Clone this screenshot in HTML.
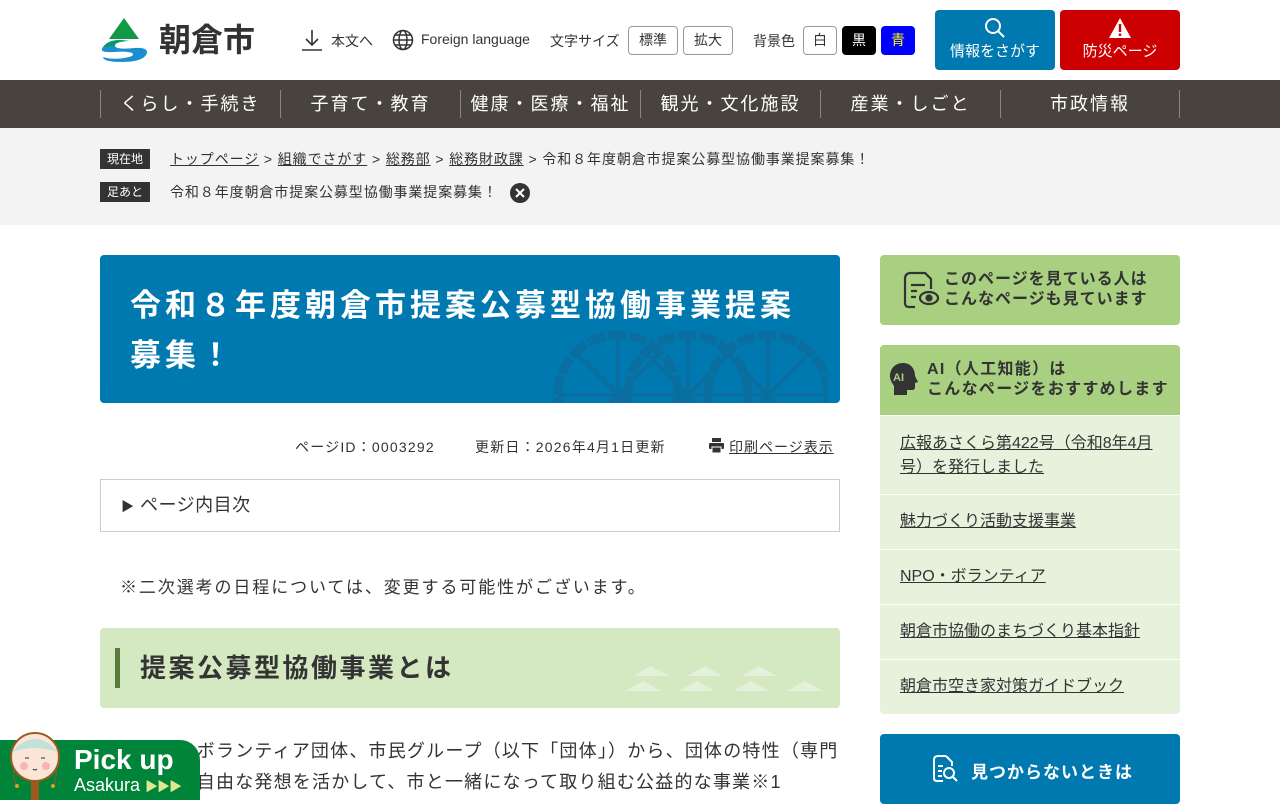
<!DOCTYPE html>
<html lang="ja"><head><meta charset="utf-8">
<style>
*{margin:0;padding:0;box-sizing:border-box}
body{width:1280px;height:800px;overflow:hidden;background:#fff;font-family:"Liberation Sans","Noto Sans CJK JP",sans-serif;color:#333;position:relative}
.a{position:absolute}
.btn{position:absolute;border:1px solid #999;border-radius:4px;font-size:14px;text-align:center;line-height:26px;background:#fff;color:#333}
.nav{position:absolute;top:80px;left:0;width:1280px;height:48px;background:#48433c}
.nav div{position:absolute;top:10px;height:28px;width:180px;border-left:1px solid #8a857e;color:#fff;font-size:18px;text-align:center;line-height:28px;letter-spacing:2px}
.lbl{position:absolute;left:100px;width:50px;height:20px;background:#333;color:#fff;font-size:12px;text-align:center;line-height:20px}
.bc{position:absolute;left:170px;font-size:14px;color:#333;line-height:20px;letter-spacing:0.9px}
.bc u{text-decoration:underline}
.li{position:absolute;left:880px;width:300px;background:#e7f2dd;border-top:1px solid #fff;font-size:16px;padding-left:20px;color:#333}
.li span{text-decoration:underline}
</style></head><body>
<svg class="a" style="left:100px;top:17px" width="50" height="46" viewBox="0 0 50 46">
<polygon points="24,1 9,22 39,22" fill="#109a47"/>
<path d="M3 30 Q10 20 30 24 Q16 23 15 28 Q14 33 34 31 Q48 30 47 36 Q44 45 22 45 Q3 45 3 40 Q12 43 24 41 Q36 39 32 36 Q28 34 14 35 Q-2 36 3 30Z" fill="#1a8fd0"/>
<path d="M3 30 Q10 22 28 24 Q16 25 15 28 Q8 30 3 30Z" fill="#109a47"/>
</svg>
<div class="a" style="left:159px;top:20px;font-size:32px;font-weight:bold;color:#333;line-height:40px">朝倉市</div>
<svg class="a" style="left:301px;top:29px" width="22" height="22" viewBox="0 0 22 22" fill="none" stroke="#333" stroke-width="1.6"><path d="M11 1v15M5 10l6 6 6-6M1 21h20"/></svg>
<div class="a" style="left:331px;top:31px;font-size:14px">本文へ</div>
<svg class="a" style="left:392px;top:29px" width="22" height="22" viewBox="0 0 22 22" fill="none" stroke="#333" stroke-width="1.5"><circle cx="11" cy="11" r="9.5"/><ellipse cx="11" cy="11" rx="4" ry="9.5"/><path d="M1.5 11h19M3 6h16M3 16h16"/></svg>
<div class="a" style="left:421px;top:31px;font-size:14px">Foreign language</div>
<div class="a" style="left:550px;top:31px;font-size:14px">文字サイズ</div>
<div class="btn" style="left:628px;top:26px;width:50px;height:29px">標準</div>
<div class="btn" style="left:683px;top:26px;width:50px;height:29px">拡大</div>
<div class="a" style="left:753px;top:31px;font-size:14px">背景色</div>
<div class="btn" style="left:803px;top:26px;width:34px;height:29px">白</div>
<div class="btn" style="left:842px;top:26px;width:34px;height:29px;background:#000;color:#fff;border-color:#000">黒</div>
<div class="btn" style="left:881px;top:26px;width:34px;height:29px;background:#00f;color:#ff0;border-color:#00f">青</div>
<div class="a" style="left:935px;top:10px;width:120px;height:60px;background:#0079b0;border-radius:4px;color:#fff;font-size:15px;text-align:center">
<svg style="margin-top:7px" width="22" height="22" viewBox="0 0 22 22" fill="none" stroke="#fff" stroke-width="2"><circle cx="9" cy="9" r="7"/><path d="M14 14l6 6"/></svg>
<div style="line-height:18px;margin-top:0">情報をさがす</div></div>
<div class="a" style="left:1060px;top:10px;width:120px;height:60px;background:#cc0000;border-radius:4px;color:#fff;font-size:15px;text-align:center">
<svg style="margin-top:7px" width="24" height="22" viewBox="0 0 24 22"><polygon points="12,1 23,21 1,21" fill="#fff"/><rect x="10.8" y="7" width="2.4" height="8" fill="#c00"/><rect x="10.8" y="16.5" width="2.4" height="2.4" fill="#c00"/></svg>
<div style="line-height:18px">防災ページ</div></div>
<div class="nav">
<div style="left:100px">くらし・手続き</div>
<div style="left:280px">子育て・教育</div>
<div style="left:460px">健康・医療・福祉</div>
<div style="left:640px">観光・文化施設</div>
<div style="left:820px">産業・しごと</div>
<div style="left:1000px;border-right:1px solid #8a857e">市政情報</div>
</div>
<div class="a" style="left:0;top:128px;width:1280px;height:97px;background:#f3f3f3"></div>
<div class="lbl" style="top:149px">現在地</div>
<div class="bc" style="top:149px"><u>トップページ</u> &gt; <u>組織でさがす</u> &gt; <u>総務部</u> &gt; <u>総務財政課</u> &gt; 令和８年度朝倉市提案公募型協働事業提案募集！</div>
<div class="lbl" style="top:182px">足あと</div>
<div class="bc" style="top:182px">令和８年度朝倉市提案公募型協働事業提案募集！</div>
<svg class="a" style="left:510px;top:183px" width="20" height="20" viewBox="0 0 20 20"><circle cx="10" cy="10" r="10" fill="#333"/><path d="M6 6l8 8M14 6l-8 8" stroke="#fff" stroke-width="2"/></svg>
<div class="a" style="left:100px;top:255px;width:740px;height:148px;background:#0079b0;border-radius:4px;overflow:hidden">
<svg class="a" style="left:448px;top:60px" width="280" height="100" viewBox="0 0 280 100" fill="none" stroke="#0a6ea0" stroke-width="9"><circle cx="70" cy="80" r="60" stroke-dasharray="18 3"/><circle cx="140" cy="80" r="60" stroke-dasharray="18 3"/><circle cx="220" cy="80" r="60" stroke-dasharray="18 3"/><g stroke-width="4"><path d="M10 80h270M70 20v80M140 20v80M220 20v80M30 40l80 80M110 40l-80 80M100 40l80 80M180 40l-80 80M180 40l80 80M260 40l-80 80"/></g></svg>
<div class="a" style="left:30px;top:26px;width:680px;font-size:31px;font-weight:bold;color:#fff;line-height:50px;letter-spacing:4px">令和８年度朝倉市提案公募型協働事業提案募集！</div>
</div>
<div class="a" style="left:295px;top:437px;font-size:14px;letter-spacing:1.2px">ページID：0003292</div>
<div class="a" style="left:475px;top:437px;font-size:14px;letter-spacing:1.2px">更新日：2026年4月1日更新</div>
<svg class="a" style="left:709px;top:438px" width="15" height="15" viewBox="0 0 15 15" fill="#333"><rect x="3" y="0" width="9" height="4"/><rect x="0" y="5" width="15" height="6" rx="1"/><rect x="3" y="9" width="9" height="6" fill="#333" stroke="#fff" stroke-width="1"/></svg>
<div class="a" style="left:729px;top:437px;font-size:14px;text-decoration:underline;letter-spacing:1px">印刷ページ表示</div>
<div class="a" style="left:100px;top:479px;width:740px;height:53px;border:1px solid #ccc;font-size:18px;padding-left:20px;line-height:51px;letter-spacing:0.5px"><span style="font-size:13px">▶</span> ページ内目次</div>
<div class="a" style="left:120px;top:573px;font-size:17px;letter-spacing:1.9px">※二次選考の日程については、変更する可能性がございます。</div>
<div class="a" style="left:100px;top:628px;width:740px;height:80px;background:#d4e8c2;border-radius:4px;overflow:hidden">
<div class="a" style="left:15px;top:20px;width:5px;height:40px;background:#5a7a3e"></div>
<div class="a" style="left:40px;top:21px;font-size:26px;font-weight:bold;line-height:38px;letter-spacing:2.5px">提案公募型協働事業とは</div>
<svg class="a" style="left:525px;top:38px" width="200" height="30" viewBox="0 0 200 30" fill="#e4f0d9"><polygon points="26,0 44,10 8,10"/><polygon points="80,0 98,10 62,10"/><polygon points="134,0 152,10 116,10"/><polygon points="0,25 18,15 36,25"/><polygon points="54,25 72,15 90,25"/><polygon points="108,25 126,15 144,25"/><polygon points="162,25 180,15 198,25"/></svg>
</div>
<div class="a" style="left:120px;top:736px;font-size:18px;line-height:31px;width:720px;letter-spacing:1.2px">ＮＰＯやボランティア団体、市民グループ（以下「団体」）から、団体の特性（専門性等）や自由な発想を活かして、市と一緒になって取り組む公益的な事業※1</div>
<div class="a" style="left:880px;top:255px;width:300px;height:70px;background:#a8d080;border-radius:4px">
<svg class="a" style="left:23px;top:16px" width="36" height="38" viewBox="0 0 36 38" fill="none" stroke="#333" stroke-width="2.2"><path d="M8 2h14l6 6v10M8 2Q2 2 2 8v24q0 4 4 4h6"/><path d="M8 14h14M8 20h6M8 26h5"/><ellipse cx="26" cy="27" rx="9" ry="6"/><circle cx="26" cy="27" r="2.5" fill="#333"/></svg>
<div class="a" style="left:64px;top:15px;font-size:16px;font-weight:bold;line-height:20px;letter-spacing:1px">このページを見ている人は<br>こんなページも見ています</div>
</div>
<div class="a" style="left:880px;top:345px;width:300px;height:70px;background:#a8d080;border-radius:4px 4px 0 0">
<svg class="a" style="left:9px;top:17px" width="30" height="34" viewBox="0 0 30 34"><path d="M14 1C6 1 1 7 1 14c0 5 3 8 4 10v9h13v-5h5c2 0 3-1 3-3v-4l3-1-3-6C26 6 21 1 14 1Z" fill="#333"/><text x="4" y="19" font-size="11" font-weight="bold" fill="#a8d080" font-family="Liberation Sans">AI</text></svg>
<div class="a" style="left:47px;top:15px;font-size:16px;font-weight:bold;line-height:20px;letter-spacing:1.3px">AI（人工知能）は<br>こんなページをおすすめします</div>
</div>
<div class="li" style="top:415px;height:79px;padding-top:16px;line-height:24px"><span>広報あさくら第422号（令和8年4月<br>号）を発行しました</span></div>
<div class="li" style="top:494px;height:55px;line-height:54px"><span>魅力づくり活動支援事業</span></div>
<div class="li" style="top:549px;height:55px;line-height:54px"><span>NPO・ボランティア</span></div>
<div class="li" style="top:604px;height:55px;line-height:54px"><span>朝倉市協働のまちづくり基本指針</span></div>
<div class="li" style="top:659px;height:55px;line-height:54px;border-radius:0 0 4px 4px"><span>朝倉市空き家対策ガイドブック</span></div>
<div class="a" style="left:880px;top:734px;width:300px;height:70px;background:#0079b0;border-radius:4px">
<svg class="a" style="left:52px;top:20px" width="28" height="30" viewBox="0 0 28 30" fill="none" stroke="#fff" stroke-width="2"><path d="M14 2H6Q2 2 2 6v18q0 3 3 3h6M14 2l6 6v4M6 12h5M6 17h4M6 22h4"/><circle cx="17" cy="19" r="5"/><path d="M21 23l4 4"/></svg>
<div class="a" style="left:91px;top:24px;font-size:17px;font-weight:bold;color:#fff;letter-spacing:1px">見つからないときは</div>
</div>
<div class="a" style="left:0;top:740px;width:200px;height:60px;background:#00843a;border-radius:0 20px 0 0"></div>
<svg class="a" style="left:8px;top:730px" width="56" height="70" viewBox="0 0 56 70"><path d="M7 36Q4 48 9 56M47 36Q50 48 45 56" stroke="#a0522d" stroke-width="1" fill="none"/><circle cx="9" cy="56" r="2" fill="#e0a020"/><circle cx="45" cy="56" r="2" fill="#e0a020"/><rect x="23" y="48" width="8" height="22" fill="#9a5a20"/><circle cx="27" cy="27" r="24" fill="#fbe5d6" stroke="#9a5a20" stroke-width="2"/><path d="M4 22Q27 -4 50 22Q27 14 4 22Z" fill="#bfe3d8"/><circle cx="16" cy="36" r="4" fill="#f5b5b0"/><circle cx="38" cy="36" r="4" fill="#f5b5b0"/><path d="M17 28h4M33 28h4M25 39q2 2 4 0" stroke="#333" stroke-width="1" fill="none"/></svg>
<div class="a" style="left:74px;top:743px;font-size:28px;font-weight:bold;color:#fff;line-height:34px">Pick up</div>
<div class="a" style="left:74px;top:774px;font-size:18px;color:#fff;line-height:22px">Asakura <span style="color:#e0e890;font-size:13px;letter-spacing:-1px">▶▶▶</span></div>
</body></html>
